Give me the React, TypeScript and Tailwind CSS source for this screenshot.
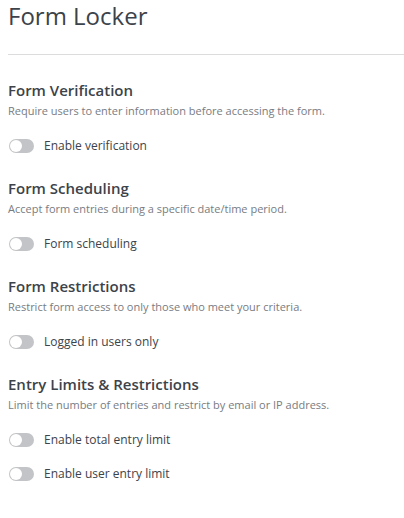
const sections = [
  {
    title: "Form Verification",
    desc: "Require users to enter information before accessing the form.",
    toggles: ["Enable verification"],
  },
  {
    title: "Form Scheduling",
    desc: "Accept form entries during a specific date/time period.",
    toggles: ["Form scheduling"],
  },
  {
    title: "Form Restrictions",
    desc: "Restrict form access to only those who meet your criteria.",
    toggles: ["Logged in users only"],
  },
  {
    title: "Entry Limits & Restrictions",
    desc: "Limit the number of entries and restrict by email or IP address.",
    toggles: ["Enable total entry limit", "Enable user entry limit"],
  },
];

const Toggle = ({ label }: { label: string }) => (
  <label className="flex items-center h-[20px] cursor-pointer">
    <span className="relative w-[25px] h-[14px] rounded-full bg-[#c3c4c7] mr-[10px] ml-[1px]">
      <span className="absolute left-[1px] top-[1px] w-[12px] h-[12px] rounded-full bg-white" />
    </span>
    <span className="text-[12px] text-[#3c434a]">{label}</span>
  </label>
);

export default function App() {
  return (
    <div className="bg-white w-[404px] min-h-[518px] pl-2 font-['Open_Sans',sans-serif]">
      <h1 className="text-[24px] leading-[32px] text-[#3c434a]">Form Locker</h1>
      <div className="mt-[22px] border-t border-[#dcdcde]" />
      {sections.map((s, i) => (
        <div key={s.title} className={i === 0 ? "mt-[25px]" : "mt-[22px]"}>
          <h2 className="text-[15px] leading-[20px] font-semibold text-[#3c434a]">{s.title}</h2>
          <p className="text-[11px] leading-[16px] text-[#787c82] mt-[3px]">{s.desc}</p>
          <div className="mt-[17px] flex flex-col gap-[14px]">
            {s.toggles.map((t) => (
              <Toggle key={t} label={t} />
            ))}
          </div>
        </div>
      ))}
    </div>
  );
}
